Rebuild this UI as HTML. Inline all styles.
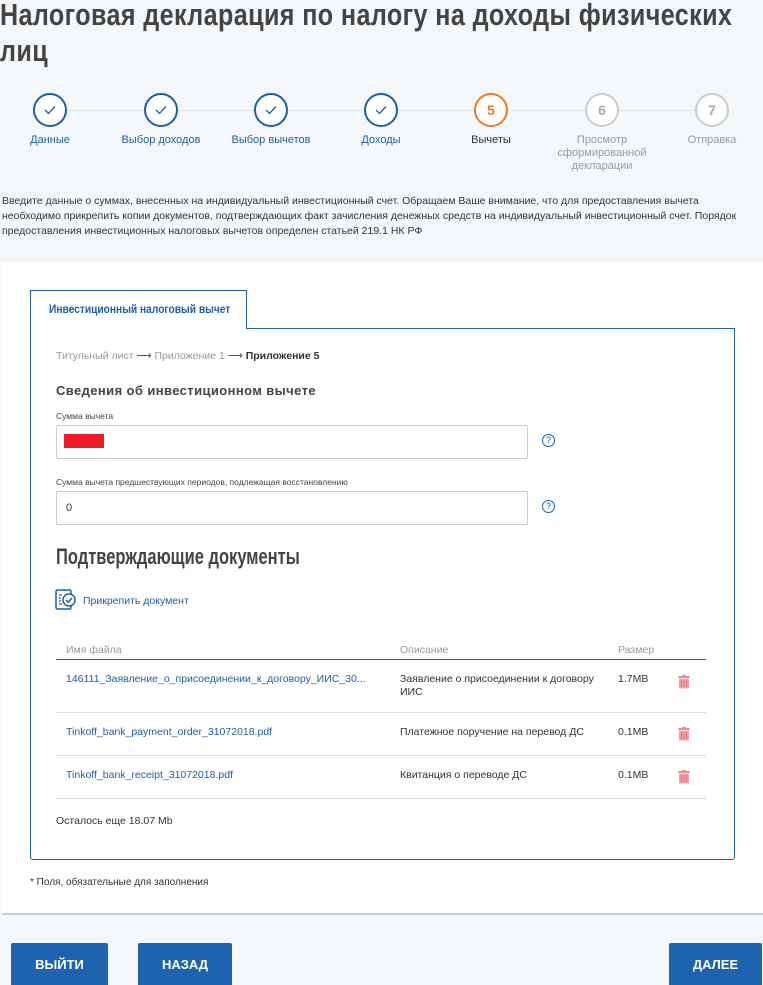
<!DOCTYPE html>
<html><head><meta charset="utf-8"><style>
*{margin:0;padding:0;box-sizing:border-box}
body{width:763px;height:985px;background:#f4f8fa;font-family:"Liberation Sans",sans-serif;position:relative;overflow:hidden;color:#333}
.a{position:absolute;white-space:nowrap}
.title{left:0;top:-3px;font-size:31px;font-weight:bold;color:#444;line-height:36px;transform:scaleX(.81);transform-origin:0 0;letter-spacing:.5px}
.circ{width:34px;height:34px;border-radius:50%;border:2px solid #1d5fa8;background:#fff;display:flex;align-items:center;justify-content:center;font-weight:bold;font-size:14px}
.lbl{font-size:11px;color:#1d5fa8;text-align:center;width:110px;line-height:13px;white-space:normal}
.line{height:1px;background:#dde4ea;top:110px;left:50px;width:662px}
.intro{left:2px;top:194px;font-size:10.5px;line-height:15px;color:#333;width:735px;white-space:normal}
.panel{left:2px;top:262px;width:761px;height:653px;background:#fff;border-bottom:2px solid #ccc}
.box{left:30px;top:328px;width:705px;height:532px;border:1px solid #1d5fa8;border-radius:0 0 3px 3px}
.tab{left:30px;top:290px;width:217px;height:39px;border:1px solid #1d5fa8;border-bottom:none;background:#fff}
.tabt{left:49px;top:302px;font-size:12px;font-weight:bold;color:#1d5fa8;transform:scaleX(.85);transform-origin:0 0}
.inp{border:1px solid #ccc;border-radius:2px;background:#fff;width:472px;height:34px;left:56px}
.small{font-size:8.5px;color:#444}
.q{width:13px;height:13px;border:1px solid #1d5fa8;border-radius:50%;font-size:9px;color:#1d5fa8;text-align:center;line-height:11px}
.lnk{color:#1d5fa8;font-size:10.5px}
.td{font-size:10.5px;color:#333}
.hr{left:56px;width:650px;height:1px;background:#ddd}
.btn{top:943px;height:42px;background:#1d63b0;color:#fff;font-weight:bold;font-size:13px;display:flex;align-items:center;justify-content:center;border-radius:2px 2px 0 0}
.trash{width:12px;height:14px}
</style></head><body>
<div class="a title">Налоговая декларация по налогу на доходы физических<br>лиц</div>
<div class="a line"></div>
<div class="a circ" style="left:33px;top:93px"><svg width="12" height="10"><path d="M1 5 L4.5 8.5 L11 1.5" fill="none" stroke="#1d5fa8" stroke-width="1.3"/></svg></div>
<div class="a circ" style="left:144px;top:93px"><svg width="12" height="10"><path d="M1 5 L4.5 8.5 L11 1.5" fill="none" stroke="#1d5fa8" stroke-width="1.3"/></svg></div>
<div class="a circ" style="left:254px;top:93px"><svg width="12" height="10"><path d="M1 5 L4.5 8.5 L11 1.5" fill="none" stroke="#1d5fa8" stroke-width="1.3"/></svg></div>
<div class="a circ" style="left:364px;top:93px"><svg width="12" height="10"><path d="M1 5 L4.5 8.5 L11 1.5" fill="none" stroke="#1d5fa8" stroke-width="1.3"/></svg></div>
<div class="a circ" style="left:474px;top:93px;border-color:#f07a22;color:#f07a22">5</div>
<div class="a circ" style="left:585px;top:93px;border-color:#ccc;color:#aaa">6</div>
<div class="a circ" style="left:695px;top:93px;border-color:#ccc;color:#aaa">7</div>
<div class="a lbl" style="left:-5px;top:134px">Данные</div>
<div class="a lbl" style="left:106px;top:134px">Выбор доходов</div>
<div class="a lbl" style="left:216px;top:134px">Выбор вычетов</div>
<div class="a lbl" style="left:326px;top:134px">Доходы</div>
<div class="a lbl" style="left:436px;top:134px;color:#333">Вычеты</div>
<div class="a lbl" style="left:547px;top:134px;color:#999">Просмотр сформированной декларации</div>
<div class="a lbl" style="left:657px;top:134px;color:#999">Отправка</div>
<div class="a intro">Введите данные о суммах, внесенных на индивидуальный инвестиционный счет. Обращаем Ваше внимание, что для предоставления вычета необходимо прикрепить копии документов, подтверждающих факт зачисления денежных средств на индивидуальный инвестиционный счет. Порядок предоставления инвестиционных налоговых вычетов определен статьей 219.1 НК РФ</div>
<div class="a panel"></div>
<div class="a box"></div>
<div class="a tab"></div>
<div class="a tabt">Инвестиционный налоговый вычет</div>
<div class="a" style="left:56px;top:350px;font-size:10.5px;color:#999">Титульный лист <span style="color:#1d5fa8">⟶</span> Приложение 1 <span style="color:#1d5fa8">⟶</span> <b style="color:#333">Приложение 5</b></div>
<div class="a" style="left:56px;top:383px;font-size:13px;font-weight:bold;color:#444;letter-spacing:.4px">Сведения об инвестиционном вычете</div>
<div class="a small" style="left:56px;top:411px">Сумма вычета</div>
<div class="a inp" style="top:425px"></div>
<div class="a" style="left:64px;top:434px;width:40px;height:14px;background:#ed1c24"></div>
<div class="a q" style="left:542px;top:434px">?</div>
<div class="a small" style="left:56px;top:477px">Сумма вычета предшествующих периодов, подлежащая восстановлению</div>
<div class="a inp" style="top:491px"></div>
<div class="a" style="left:66px;top:502px;font-size:11px">0</div>
<div class="a q" style="left:542px;top:500px">?</div>
<div class="a" style="left:56px;top:544px;font-size:22px;font-weight:bold;color:#444;transform:scaleX(.75);transform-origin:0 0">Подтверждающие документы</div>
<svg class="a" style="left:55px;top:589px" width="22" height="22" viewBox="0 0 22 22"><rect x="1" y="1" width="15" height="19" rx="1.5" fill="none" stroke="#1d5fa8" stroke-width="1.5"/><path d="M4 6h3M4 9h2M4 12h2M4 15h3" stroke="#1d5fa8" stroke-width="1.2"/><circle cx="14" cy="11" r="6" fill="#fff" stroke="#1d5fa8" stroke-width="1.5"/><path d="M11 11l2.3 2.3L17 9" fill="none" stroke="#1d5fa8" stroke-width="1.5"/></svg>
<div class="a lnk" style="left:83px;top:595px">Прикрепить документ</div>
<div class="a" style="left:66px;top:644px;font-size:10.5px;color:#999">Имя файла</div>
<div class="a" style="left:400px;top:644px;font-size:10.5px;color:#999">Описание</div>
<div class="a" style="left:618px;top:644px;font-size:10.5px;color:#999">Размер</div>
<div class="a" style="left:56px;top:659px;width:650px;height:1px;background:#1d5fa8"></div>
<div class="a lnk" style="left:66px;top:673px">146111_Заявление_о_присоединении_к_договору_ИИС_30...</div>
<div class="a td" style="left:400px;top:673px;width:210px;line-height:13px;white-space:normal">Заявление о присоединении к договору ИИС</div>
<div class="a td" style="left:618px;top:673px">1.7MB</div>
<div class="a hr" style="top:712px"></div>
<div class="a lnk" style="left:66px;top:726px">Tinkoff_bank_payment_order_31072018.pdf</div>
<div class="a td" style="left:400px;top:726px">Платежное поручение на перевод ДС</div>
<div class="a td" style="left:618px;top:726px">0.1MB</div>
<div class="a hr" style="top:755px"></div>
<div class="a lnk" style="left:66px;top:769px">Tinkoff_bank_receipt_31072018.pdf</div>
<div class="a td" style="left:400px;top:769px">Квитанция о переводе ДС</div>
<div class="a td" style="left:618px;top:769px">0.1MB</div>
<div class="a hr" style="top:798px"></div>
<svg class="a trash" style="left:678px;top:675px" viewBox="0 0 12 14"><rect x="0" y="1" width="12" height="2" rx="1" fill="#f28b95"/><rect x="4" y="0" width="4" height="2" fill="#f28b95"/><rect x="1" y="3.5" width="10" height="10" rx="1" fill="#f4a0a8"/><path d="M3.5 5v7M6 5v7M8.5 5v7" stroke="#e06070" stroke-width=".7"/></svg>
<svg class="a trash" style="left:678px;top:727px" viewBox="0 0 12 14"><rect x="0" y="1" width="12" height="2" rx="1" fill="#f28b95"/><rect x="4" y="0" width="4" height="2" fill="#f28b95"/><rect x="1" y="3.5" width="10" height="10" rx="1" fill="#f4a0a8"/><path d="M3.5 5v7M6 5v7M8.5 5v7" stroke="#e06070" stroke-width=".7"/></svg>
<svg class="a trash" style="left:678px;top:770px" viewBox="0 0 12 14"><rect x="0" y="1" width="12" height="2" rx="1" fill="#f28b95"/><rect x="4" y="0" width="4" height="2" fill="#f28b95"/><rect x="1" y="3.5" width="10" height="10" rx="1" fill="#f4a0a8"/><path d="M3.5 5v7M6 5v7M8.5 5v7" stroke="#e06070" stroke-width=".7"/></svg>
<div class="a td" style="left:56px;top:815px">Осталось еще 18.07 Mb</div>
<div class="a" style="left:30px;top:877px;font-size:10px;color:#333">* Поля, обязательные для заполнения</div>
<div class="a btn" style="left:11px;width:97px">ВЫЙТИ</div>
<div class="a btn" style="left:138px;width:94px">НАЗАД</div>
<div class="a btn" style="left:669px;width:93px">ДАЛЕЕ</div>
</body></html>
